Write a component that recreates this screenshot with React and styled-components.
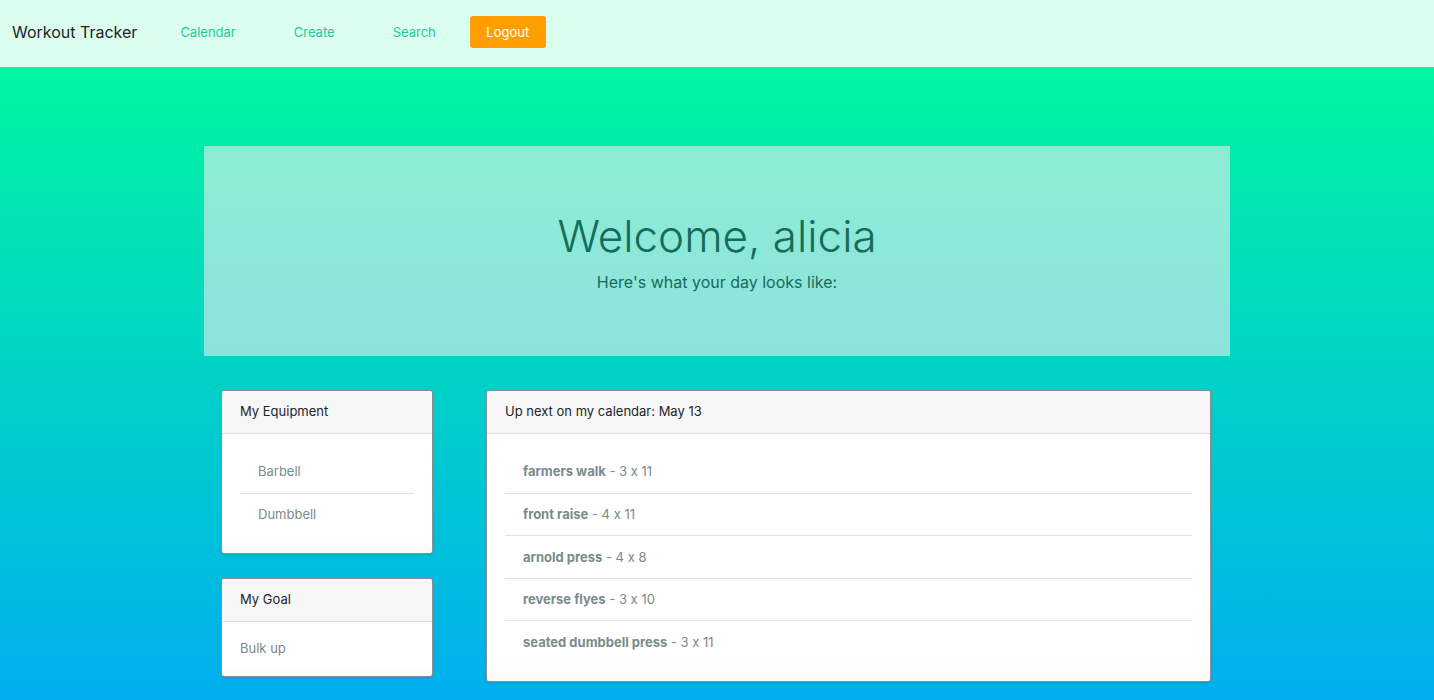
import styled, { createGlobalStyle } from "styled-components"

const GlobalStyle = createGlobalStyle`
  body {
    margin: 0;
    font-family: Inter, "Liberation Sans", sans-serif;
    font-feature-settings: "calt" 0;
    color: #212529;
  }
  * { box-sizing: border-box; }
`

const exercises = [
  { name: "farmers walk", sets: "3 x 11" },
  { name: "front raise", sets: "4 x 11" },
  { name: "arnold press", sets: "4 x 8" },
  { name: "reverse flyes", sets: "3 x 10" },
  { name: "seated dumbbell press", sets: "3 x 11" },
]

export default function App() {
  return (
    <>
      <GlobalStyle />
      <Navbar>
        <Brand>Workout Tracker</Brand>
        <NavLink>Calendar</NavLink>
        <NavLink>Create</NavLink>
        <NavLink>Search</NavLink>
        <LogoutButton>Logout</LogoutButton>
      </Navbar>
      <Main>
        <Jumbotron>
          <h1>Welcome, alicia</h1>
          <p>Here's what your day looks like:</p>
        </Jumbotron>
        <Columns>
          <Side>
            <Card>
              <CardHeader>My Equipment</CardHeader>
              <CardBody>
                <List>
                  <Item $indent>Barbell</Item>
                  <Item $indent>Dumbbell</Item>
                </List>
              </CardBody>
            </Card>
            <Card>
              <CardHeader>My Goal</CardHeader>
              <GoalBody>Bulk up</GoalBody>
            </Card>
          </Side>
          <Card>
            <CardHeader>Up next on my calendar: May 13</CardHeader>
            <CardBody>
              <List>
                {exercises.map((ex) => (
                  <Item key={ex.name} $indent>
                    <b>{ex.name}</b> - {ex.sets}
                  </Item>
                ))}
              </List>
            </CardBody>
          </Card>
        </Columns>
      </Main>
    </>
  )
}

const Navbar = styled.nav`
  height: 67px;
  background: #dcfeee;
  display: flex;
  align-items: center;
  padding: 0 12px 3px;
`
const Brand = styled.span`
  font-size: 16px;
  color: #1f2326;
  margin-right: 43px;
`
const NavLink = styled.a`
  font-size: 13px;
  color: #1ec99d;
  margin-right: 58px;
  cursor: pointer;
`
const LogoutButton = styled.button`
  margin-left: -24px;
  background: #ff9e00;
  color: #fff;
  border: none;
  border-radius: 3px;
  font-family: inherit;
  font-size: 13px;
  height: 32px;
  width: 76px;
`
const Main = styled.main`
  min-height: calc(100vh - 67px);
  background: linear-gradient(to bottom, #00f5a0, #00aeef);
  padding: 79px 0 19px;
`
const Jumbotron = styled.section`
  width: 1026px;
  height: 210px;
  margin: 0 auto;
  background: rgba(233, 236, 239, 0.6);
  display: flex;
  flex-direction: column;
  align-items: center;
  justify-content: center;
  text-align: center;
  color: #176b5a;
  h1 {
    margin: 0;
    font-weight: 300;
    font-size: 44px;
    line-height: 1.2;
  }
  p {
    margin: 9px 0 0;
    font-size: 16px;
  }
`
const Columns = styled.div`
  display: grid;
  grid-template-columns: 212px 725px;
  gap: 53px;
  justify-content: center;
  align-items: start;
  margin: 34px 0 0 -2px;
`
const Side = styled.div`
  display: flex;
  flex-direction: column;
  gap: 24px;
`
const Card = styled.div`
  background: linear-gradient(to bottom, #fff 92%, #fafafa);
  border: 1px solid #8a8f91;
  border-radius: 3px;
  overflow: hidden;
  box-shadow: 0 1px 2px rgba(0, 0, 0, 0.12);
`
const CardHeader = styled.div`
  height: 43px;
  display: flex;
  align-items: center;
  padding: 0 18px 2px;
  background: #f7f7f7;
  border-bottom: 1px solid #dcdcdc;
  font-size: 13px;
  color: #212529;
`
const CardBody = styled.div`
  padding: 16px 18px 18px;
`
const List = styled.ul`
  list-style: none;
  margin: 0;
  padding: 0;
`
const Item = styled.li`
  height: 42.5px;
  display: flex;
  align-items: center;
  padding-left: ${(p) => (p.$indent ? "18px" : "0")};
  font-size: 13px;
  color: #7b8a8b;
  white-space: pre;
  & + & {
    border-top: 1px solid #e2e2e2;
  }
  b {
    font-weight: 700;
  }
`
const GoalBody = styled.div`
  padding: 17px 18px 19px;
  font-size: 13px;
  line-height: 18px;
  color: #7b8a8b;
`
